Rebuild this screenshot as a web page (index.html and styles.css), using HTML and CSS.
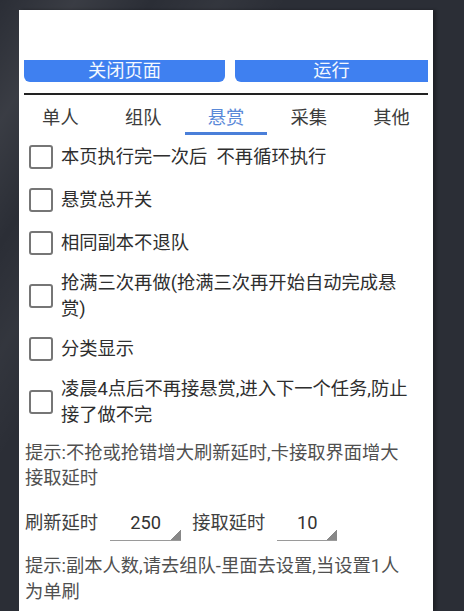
FILE: index.html
```html
<!DOCTYPE html>
<html lang="zh-CN">
<head>
<meta charset="utf-8">
<title>悬赏</title>
<link rel="stylesheet" href="styles.css">
</head>
<body>
<div class="panel">
  <div class="btn-row">
    <div class="btn btn-close">关闭页面</div>
    <div class="btn btn-run">运行</div>
  </div>
  <div class="rule"></div>
  <div class="tabs">
    <div class="tab">单人</div>
    <div class="tab">组队</div>
    <div class="tab active">悬赏</div>
    <div class="tab">采集</div>
    <div class="tab">其他</div>
  </div>
  <div class="options">
    <label class="opt"><span class="box"></span><span class="opt-text">本页执行完一次后&ensp;不再循环执行</span></label>
    <label class="opt"><span class="box"></span><span class="opt-text">悬赏总开关</span></label>
    <label class="opt"><span class="box"></span><span class="opt-text">相同副本不退队</span></label>
    <label class="opt"><span class="box"></span><span class="opt-text">抢满三次再做(抢满三次再开始自动完成悬赏)</span></label>
    <label class="opt"><span class="box"></span><span class="opt-text">分类显示</span></label>
    <label class="opt"><span class="box"></span><span class="opt-text">凌晨4点后不再接悬赏,进入下一个任务,防止接了做不完</span></label>
  </div>
  <p class="hint hint-first">提示:不抢或抢错增大刷新延时,卡接取界面增大接取延时</p>
  <div class="delay-row">
    <span class="delay-label">刷新延时</span>
    <span class="spinner spinner-wide">250</span>
    <span class="delay-label">接取延时</span>
    <span class="spinner spinner-narrow">10</span>
  </div>
  <p class="hint hint-last">提示:副本人数,请去组队-里面去设置,当设置1人为单刷</p>
</div>
</body>
</html>
```

FILE: styles.css
```css
html, body {
  margin: 0;
  padding: 0;
  height: 100%;
}

body {
  background:
    linear-gradient(122deg, rgba(255,255,255,0) 0%, rgba(255,255,255,0.07) 9%, rgba(255,255,255,0) 18%, rgba(255,255,255,0.04) 26%, rgba(255,255,255,0) 34%),
    #2b2e36;
  font-family: Roboto, "Noto Sans CJK SC", sans-serif;
  font-size: 18.3px;
  color: #2e2e2e;
  overflow: hidden;
}

.panel {
  margin: 10px 0 0 19px;
  width: 414px;
  min-height: 601px;
  background: #fff;
  box-shadow: 3px 0 3px rgba(0, 0, 0, 0.3);
}

.btn-row {
  display: flex;
  gap: 10px;
  padding: 50px 5px 0;
}

.btn {
  height: 22px;
  line-height: 22px;
  background: #3f80f0;
  color: #f4f8ff;
  text-align: center;
  overflow: hidden;
}

.btn-close {
  width: 201px;
  border-radius: 0 0 6px 6px;
}

.btn-run {
  flex: 1;
  border-radius: 0 0 0 6px;
}

.rule {
  margin: 11px 5px 0;
  height: 2px;
  background: #222;
}

.tabs {
  display: flex;
}

.tab {
  flex: 1;
  text-align: center;
  line-height: 26px;
  padding: 10px 0 1px;
  border-bottom: 3px solid transparent;
  color: #3c3c3c;
}

.tab.active {
  color: #5a89d8;
  border-bottom-color: #4a7fd9;
}

.options {
  display: flex;
  flex-direction: column;
}

.opt {
  display: flex;
  align-items: center;
  gap: 8px;
  min-height: 43px;
  padding: 5.5px 21px 5.5px 10px;
  box-sizing: border-box;
}

.box {
  flex: none;
  width: 24px;
  height: 24px;
  box-sizing: border-box;
  border: 2.5px solid #767676;
  border-radius: 3px;
}

.opt-text {
  line-height: 26px;
  color: #2e2e2e;
}

.hint {
  margin: 0;
  padding: 0 20px 0 6px;
  line-height: 25px;
  color: #505050;
}

.hint-first {
  margin-top: 7px;
}

.hint-last {
  margin-top: 12px;
  line-height: 26px;
}

.delay-row {
  display: flex;
  align-items: flex-start;
  padding: 20px 6px 0;
}

.delay-label {
  line-height: 26px;
  color: #404040;
}

.spinner {
  height: 31px;
  line-height: 26px;
  text-align: center;
  color: #333;
  box-sizing: border-box;
  border-bottom: 1.5px solid #9a9a9a;
  background: linear-gradient(to top left, #888 50%, transparent 51%) no-repeat right bottom / 10px 10px;
}

.spinner-wide {
  width: 71px;
  margin: 0 11px 0 12px;
}

.spinner-narrow {
  width: 60px;
  margin-left: 12px;
}
```
